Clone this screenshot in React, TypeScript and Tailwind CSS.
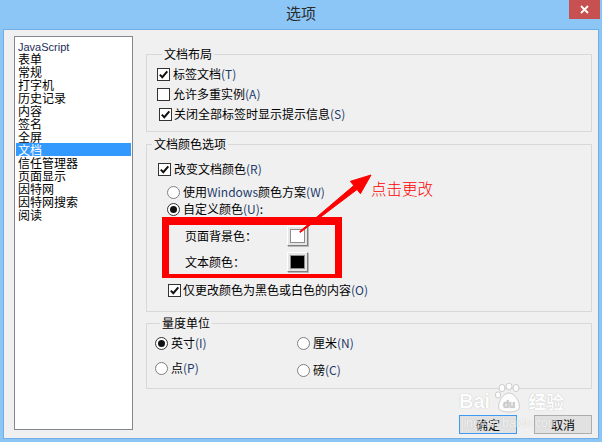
import React from "react";

const CJK = "font-['Noto_Sans_CJK_SC','Noto_Sans',sans-serif]";

function Check({ checked }: { checked: boolean }) {
  return (
    <span className="w-[13px] h-[13px] border border-[#333333] bg-white flex items-center justify-center shrink-0">
      {checked && (
        <svg width="11" height="11" viewBox="0 0 11 11">
          <path d="M1.8 5.6 L4.3 8.2 L9.3 2.4" fill="none" stroke="#111" strokeWidth="2" />
        </svg>
      )}
    </span>
  );
}

function Radio({ checked }: { checked: boolean }) {
  return (
    <span
      className={
        "w-[13px] h-[13px] rounded-full border bg-white flex items-center justify-center shrink-0 " +
        (checked ? "border-[#333333]" : "border-[#808080]")
      }
    >
      {checked && <span className="w-[7px] h-[7px] rounded-full bg-[#111]" />}
    </span>
  );
}

function Key({ k }: { k: string }) {
  return <span className="text-[#1d3b6b]">({k})</span>;
}

function Legend({ children }: { children: React.ReactNode }) {
  return <legend className="ml-[5px] px-[2px] text-[12px] leading-[16px] text-black">{children}</legend>;
}

function Swatch({ color }: { color: string }) {
  return (
    <div className="w-[21px] h-[20px] bg-[#E6E6E6] border border-t-white border-l-white border-r-[#7f7f7f] border-b-[#7f7f7f] shadow-[1px_1px_0_#b8b8b8] p-[2px] flex">
      <div className={"flex-1 border border-[#8d8d8d] " + color} />
    </div>
  );
}

const listItems = [
  "JavaScript",
  "表单",
  "常规",
  "打字机",
  "历史记录",
  "内容",
  "签名",
  "全屏",
  "文档",
  "信任管理器",
  "页面显示",
  "因特网",
  "因特网搜索",
  "阅读",
];

export default function App() {
  return (
    <div className={"relative w-[602px] h-[442px] bg-[#8BC6F7] flex flex-col overflow-hidden " + CJK}>
      {/* title bar */}
      <div className="relative h-[29px] shrink-0 flex items-start justify-center">
        <span className="mt-[3px] text-[15px] leading-[20px] text-[#2b2b2b]">选项</span>
        <div className="absolute right-[2px] top-0 w-[31px] h-[19px] bg-[#C75050] flex items-center justify-center">
          <svg width="9" height="9" viewBox="0 0 9 9">
            <path d="M1 1 L8 8 M8 1 L1 8" stroke="white" strokeWidth="1.8" />
          </svg>
        </div>
      </div>

      {/* client */}
      <div className="mx-[3px] mb-[3px] flex-1 border border-[#72AEE6] bg-[#F0F0F0] flex items-start pt-[6px] pl-[10px]">
        {/* list */}
        <div className="w-[119px] h-[394px] shrink-0 border border-[#828790] bg-white pt-[2px] px-[1px]">
          {listItems.map((it) => (
            <div
              key={it}
              className={
                "h-[13px] leading-[13px] pl-[2px] text-[12px] " +
                (it === "文档" ? "bg-[#3399FF] text-white" : "text-black")
              }
            >
              {it === "JavaScript" ? (
                <span className="font-['Liberation_Sans',sans-serif] text-[11px] text-[#1b2c58]">{it}</span>
              ) : (
                it
              )}
            </div>
          ))}
        </div>

        {/* right column */}
        <div className="ml-[13px] w-[452px] pr-[6px] pt-[10px] flex flex-col text-[12px] text-black">
          {/* group 1 */}
          <fieldset className="border border-[#D8D8D8] pt-[2px] pb-[7px] pl-[10px]">
            <Legend>文档布局</Legend>
            <div className="h-[20px] flex items-center gap-[3px]">
              <Check checked />
              <span>标签文档<Key k="T" /></span>
            </div>
            <div className="h-[20px] flex items-center gap-[3px]">
              <Check checked={false} />
              <span>允许多重实例<Key k="A" /></span>
            </div>
            <div className="h-[20px] flex items-center gap-[2px] pl-[2px]">
              <Check checked />
              <span>关闭全部标签时显示提示信息<Key k="S" /></span>
            </div>
          </fieldset>

          {/* group 2 */}
          <fieldset className="mt-[4px] border border-[#D8D8D8] pt-[8px] pb-[12px]">
            <Legend>文档颜色选项</Legend>
            <div className="h-[18px] flex items-center gap-[3px] pl-[11px]">
              <Check checked />
              <span>改变文档颜色<Key k="R" /></span>
            </div>
            <div className="mt-[5px] h-[18px] flex items-center gap-[3px] pl-[20px]">
              <Radio checked={false} />
              <span>
                使用<span className="text-[#1d3b6b]">Windows</span>颜色方案<Key k="W" />
              </span>
            </div>
            <div className="h-[16px] flex items-center gap-[3px] pl-[20px]">
              <Radio checked />
              <span>自定义颜色<Key k="U" />:</span>
            </div>
            <div className="ml-[15px] w-[180px] border-[#FF0000] border-t-[8px] border-l-[7px] border-r-[7px] border-b-[4px] pt-[1px] pb-[2px] pl-[16px]">
              <div className="h-[20px] flex items-center">
                <span className="w-[102px]">页面背景色：</span>
                <Swatch color="bg-white" />
              </div>
              <div className="mt-[6px] h-[20px] flex items-center">
                <span className="w-[102px]">文本颜色：</span>
                <Swatch color="bg-black" />
              </div>
            </div>
            <div className="mt-[3px] h-[18px] flex items-center gap-[2px] pl-[21px]">
              <Check checked />
              <span>仅更改颜色为黑色或白色的内容<Key k="O" /></span>
            </div>
          </fieldset>

          {/* group 3 */}
          <fieldset className="mt-[3px] border border-[#D8D8D8] pt-[3px] pb-[9px] pl-[8px]">
            <Legend>量度单位</Legend>
            <div className="grid grid-cols-[142px_1fr] gap-y-[7px]">
              <div className="h-[18px] flex items-center gap-[3px]">
                <Radio checked />
                <span>英寸<Key k="I" /></span>
              </div>
              <div className="h-[18px] flex items-center gap-[3px]">
                <Radio checked={false} />
                <span>厘米<Key k="N" /></span>
              </div>
              <div className="h-[18px] flex items-center gap-[3px]">
                <Radio checked={false} />
                <span>点<Key k="P" /></span>
              </div>
              <div className="h-[18px] flex items-center gap-[3px] mt-[2px]">
                <Radio checked={false} />
                <span>磅<Key k="C" /></span>
              </div>
            </div>
          </fieldset>

          {/* buttons */}
          <div className="mt-[26px] flex justify-end gap-[17px]">
            <button className="w-[58px] h-[19px] border border-[#3C9AF0] bg-[#E1E1E1] text-[12px] leading-[16px]">
              确定
            </button>
            <button className="w-[58px] h-[19px] border border-[#ADADAD] bg-[#E1E1E1] text-[12px] leading-[16px]">
              取消
            </button>
          </div>
        </div>
      </div>

      {/* annotation: arrow + text */}
      <svg className="absolute left-0 top-0 pointer-events-none" width="602" height="442">
        <polygon
          points="299.7,231.6 353.8,185.6 350.4,181.3 371,175 360.4,193.7 357,189.5 300.3,232.4"
          fill="#FF0000"
          stroke="#FF0000"
          strokeWidth="1"
          strokeLinejoin="round"
        />
      </svg>
      <span className="absolute left-[371px] top-[179px] text-[15.5px] leading-[18px] font-light text-[#FF0000]">
        点击更改
      </span>

      {/* watermark */}
      <div className="absolute left-[459px] top-[383px] pointer-events-none flex flex-col items-start text-white opacity-90 [text-shadow:0_0_1px_#a9a9a9]">
        <div className="flex items-end gap-[4px]">
          <span className="font-['Liberation_Sans',sans-serif] font-bold text-[20px] leading-[24px]">Bai</span>
          <svg width="30" height="30" viewBox="0 0 30 30">
            <g fill="white" stroke="#bdbdbd" strokeWidth="0.8">
              <ellipse cx="8" cy="5" rx="3" ry="3.6" />
              <ellipse cx="15" cy="3.5" rx="3" ry="3.4" />
              <ellipse cx="22" cy="5" rx="3" ry="3.6" />
              <ellipse cx="4" cy="12" rx="2.6" ry="3.2" />
              <path d="M15 10 C21 10 27 20 25 26 C23 30 7 30 5 26 C3 20 9 10 15 10 Z" />
            </g>
            <text x="15" y="25" textAnchor="middle" fontSize="10" fontWeight="bold" fill="#c8c8c8" fontFamily="Liberation Sans, sans-serif">
              du
            </text>
          </svg>
          <span className="font-bold text-[18px] leading-[24px]">经验</span>
        </div>
        <span className="font-['Liberation_Sans',sans-serif] text-[12px] leading-[14px] mt-[3px] ml-[2px] opacity-70">
          jingyan.baidu.com
        </span>
      </div>
    </div>
  );
}
